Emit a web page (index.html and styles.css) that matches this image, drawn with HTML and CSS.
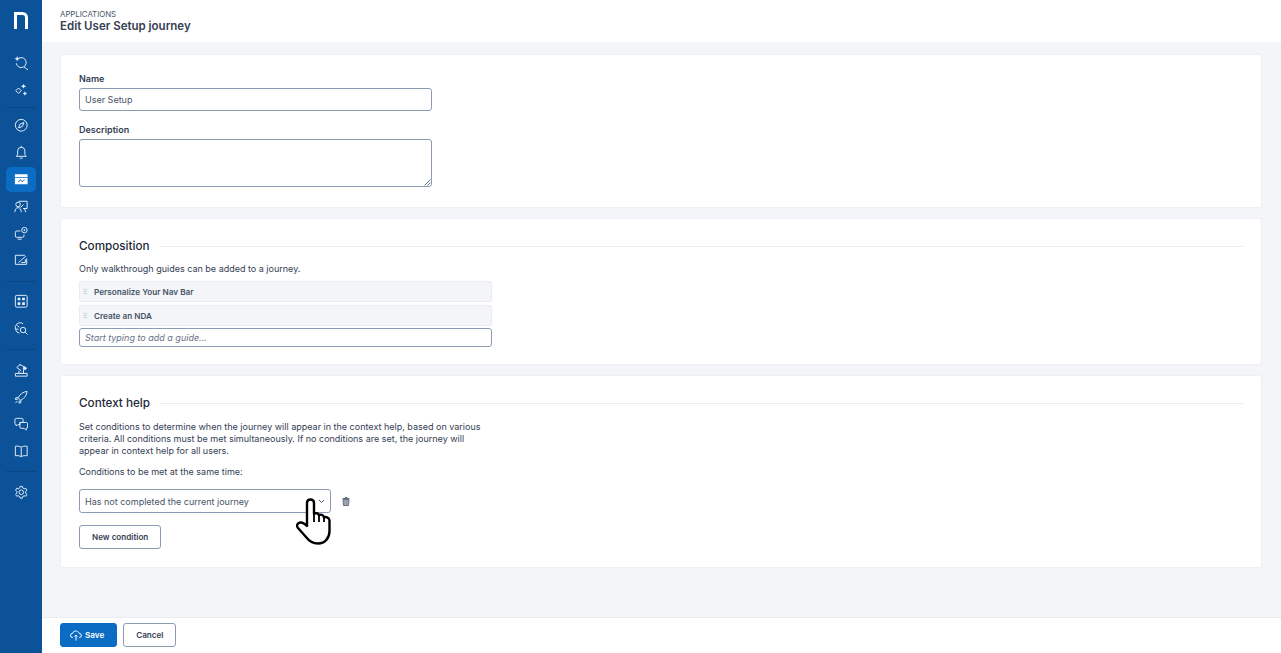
FILE: index.html
```html
<!DOCTYPE html>
<html lang="en">
<head>
<meta charset="utf-8">
<title>Edit User Setup journey</title>
<link rel="stylesheet" href="styles.css">
</head>
<body>
<div class="app">
  <nav class="side">
    <div class="logo"><svg width="14" height="17" viewBox="0 0 14 17"><path d="M1.500 17V1.500H8.500A4 4 0 0 1 12.500 5.500V17" fill="none" stroke="#fff" stroke-width="3"/></svg></div>
    <a class="item"><svg class="ic" viewBox="0 0 16 16"><path d="M3.500 4A5.500 5.500 0 1 1 2.500 8M11 12L15.500 15.500"/><path class="f" d="M3.500 0L4.400 2.100L6.500 3L4.400 3.900L3.500 6L2.600 3.900L.5 3L2.600 2.100Z"/></svg></a>
    <a class="item"><svg class="ic" viewBox="0 0 16 16"><path class="f" d="M10.500 1L11.500 2.700L13.500 3.500L11.500 4.300L10.500 6L9.500 4.300L7.500 3.500L9.500 2.700ZM12 9L12.800 10.700L14.500 11.500L12.800 12.300L12 14L11.200 12.300L9.500 11.500L11.200 10.700Z"/><path d="M5 5.500L8 8.500L5 11.500L2 8.500Z"/></svg></a>
    <hr class="div d1">
    <a class="item"><svg class="ic" viewBox="0 0 16 16"><circle cx="8" cy="8" r="6.500"/><path d="M11 5L9.300 9.300L5 11L6.700 6.700Z"/></svg></a>
    <a class="item"><svg class="ic" viewBox="0 0 16 16"><path d="M2.500 12.500H13.500L12 10.500V6.500A4 4 0 0 0 4 6.500V10.500ZM6.500 14.500H9.500M8 1V2.500"/></svg></a>
    <a class="item active"><svg class="ic" viewBox="0 0 16 16"><path class="f" fill-rule="evenodd" d="M1 2.500H15V13.500H1ZM1 5.500V6.300H15V5.500ZM4 11L5 11.500L7 9.200L9 11L12 8.800L11.500 8.200L9 10L7 8L5 10.500Z"/></svg></a>
    <a class="item"><svg class="ic" viewBox="0 0 16 16"><path d="M5 2.500H14.500V10.500H10M7 9.500L10.500 6"/><circle cx="4.500" cy="6" r="2.500"/><path d="M1 14.500C1 11.500 2.500 9.500 4.500 9.500S8 11.500 8 14.500M11.500 10.500L13 14.500"/></svg></a>
    <a class="item"><svg class="ic" viewBox="0 0 16 16"><path d="M7 5.500H3A1.500 1.500 0 0 0 1.500 7V11A1.500 1.500 0 0 0 3 12.500H9.500A1.500 1.500 0 0 0 11 11V9.500M4 14.500H8.500"/><circle cx="11.500" cy="4.500" r="3"/><circle class="f" cx="11.500" cy="4.500" r="1"/></svg></a>
    <a class="item"><svg class="ic" viewBox="0 0 16 16"><path d="M12 2.500H1.500V12.500H14V6M5 10.500L13 3.500M8 10.500H12.500V7"/></svg></a>
    <hr class="div d2">
    <a class="item"><svg class="ic" viewBox="0 0 16 16"><rect x="1.500" y="1.500" width="13" height="13" rx="1.500"/><path class="f" d="M4 4H7V7H4ZM9 4H12V7H9ZM4 9H7V12H4ZM9 9H12V12H9Z"/></svg></a>
    <a class="item"><svg class="ic" viewBox="0 0 16 16"><path d="M6 13.500A6 6 0 0 1 3 3.500C5 1.500 8 1.500 10 3M3.500 5L6 7M2 9H5"/><circle cx="10" cy="10" r="3"/><path d="M12.200 12.200L15 15"/></svg></a>
    <hr class="div d3">
    <a class="item"><svg class="ic" viewBox="0 0 16 16"><path d="M7 1.500L3 5L8 8.500M6 1.500L12 4.500M5.500 8.500V11.500H10.500V7M1.500 14.500H14.500V11.500H1.500Z"/><path class="f" d="M11 3.500L14.500 5.500L12.500 8L9.500 6Z"/></svg></a>
    <a class="item"><svg class="ic" viewBox="0 0 16 16"><path d="M14.500 1.500C10 2 7 4.500 4.500 8.500L7.500 11.500C11.500 9 14 6 14.500 1.500ZM4.500 8.500L2 8.500L1.500 10.500L4.500 10M7.500 11.500V14L5.500 14.500L6 11.500M4 12L1.500 14.500"/></svg></a>
    <a class="item"><svg class="ic" viewBox="0 0 16 16"><path d="M2.500 1.500H8.500A1.500 1.500 0 0 1 10 3V6H6.500V8.500L4 8.500L2.500 10V8.500A1.500 1.500 0 0 1 1 7V3A1.500 1.500 0 0 1 2.500 1.500ZM6.500 6H13.500A1.500 1.500 0 0 1 15 7.500V11A1.500 1.500 0 0 1 13.500 12.500V14.500L11.500 12.500H8A1.500 1.500 0 0 1 6.500 11Z"/></svg></a>
    <a class="item"><svg class="ic" viewBox="0 0 16 16"><path d="M8 3.500C6.500 2.500 4 2 1.500 2.500V13C4 12.500 6.500 13 8 14C9.500 13 12 12.500 14.500 13V2.500C12 2 9.500 2.500 8 3.500ZM8 3.500V14"/></svg></a>
    <hr class="div d4">
    <a class="item"><svg class="ic" viewBox="0 0 16 16"><circle cx="8" cy="8" r="2.500"/><path d="M6.800 1.500H9.200L9.700 3.300L11.200 4.100L13 3.600L14.200 5.700L12.900 7V9L14.200 10.300L13 12.400L11.200 11.900L9.700 12.700L9.200 14.500H6.800L6.300 12.700L4.800 11.900L3 12.400L1.800 10.300L3.100 9V7L1.800 5.700L3 3.600L4.800 4.100L6.300 3.300Z"/></svg></a>
  </nav>
  <div class="content">
    <header class="top">
      <div class="crumb">APPLICATIONS</div>
      <h1 class="title">Edit User Setup journey</h1>
    </header>
    <main class="main">
      <section class="card c1">
        <label class="lab">Name</label>
        <div class="field name">User Setup</div>
        <label class="lab l2">Description</label>
        <div class="area"><svg class="grip" width="7" height="7" viewBox="0 0 7 7"><path d="M6.500 .5L.5 6.500M6.500 3.500L3.500 6.500" stroke="#667085" fill="none"/></svg></div>
      </section>
      <section class="card c2">
        <div class="head"><h2>Composition</h2><span class="rule"></span></div>
        <p class="txt">Only walkthrough guides can be added to a journey.</p>
        <div class="guide"><span class="dots">⠿</span>Personalize Your Nav Bar</div>
        <div class="guide"><span class="dots">⠿</span>Create an NDA</div>
        <div class="field add">Start typing to add a guide...</div>
      </section>
      <section class="card c3">
        <div class="head"><h2>Context help</h2><span class="rule"></span></div>
        <p class="txt para">Set conditions to determine when the journey will appear in the context help, based on various criteria. All conditions must be met simultaneously. If no conditions are set, the journey will appear in context help for all users.</p>
        <p class="txt cond">Conditions to be met at the same time:</p>
        <div class="row">
          <div class="select">Has not completed the current journey
            <svg class="chev" width="7" height="5" viewBox="0 0 7 5"><path d="M1 1L3.500 3.500L6 1" fill="none" stroke="#475467"/></svg>
          </div>
          <svg class="trash" width="8" height="9" viewBox="0 0 8 9"><path d="M1 2.500H7L6.500 8.500H1.500Z" fill="#98a2b3" stroke="#667085"/><path d="M.5 1.500H7.500M3 1.200V.5H5V1.200" fill="none" stroke="#667085"/></svg>
        </div>
        <button class="btn newc">New condition</button>
      </section>
    </main>
    <footer class="foot">
      <button class="btn save"><svg width="12" height="11" viewBox="0 0 12 11"><path d="M3 7.500H2.500A2 2 0 0 1 2.500 3.500C3 1.500 5 .5 6.500 1.200C8 1.500 9 2.500 9.200 3.500A2 2 0 0 1 9.500 7.500H9M6 10.500V5M4.500 6.500L6 5L7.500 6.500" fill="none" stroke="#fff"/></svg>Save</button>
      <button class="btn">Cancel</button>
    </footer>
  </div>
</div>
<svg class="hand" width="36" height="48" viewBox="0 0 36 48"><path d="M11 5C11 2.500 12.500 1.500 14.500 1.500S18 2.500 18 5V16C19.500 14.500 22.500 15 23 17.500C24.500 16 27.500 16.500 28 19.500C29.500 18.500 33 19 33.500 22.500V33C33.500 40 29 45.500 22 45.500C16 45.500 13 43 10 39L2 30C0 27.500 1.500 25 4 24.500C6.500 24 9 26 11 28Z" fill="#fff" stroke="#000" stroke-width="2.400" stroke-linejoin="round"/><path d="M18 16V24M23 17.500V24M28 19.500V24" stroke="#000" stroke-width="1.800" fill="none"/></svg>
</body>
</html>
```
FILE: styles.css
```css
* { box-sizing: border-box; }
html, body { margin: 0; height: 100%; }
body { font-family: Inter, "Liberation Sans", sans-serif; color: #344054; font-size: 9px; overflow: hidden; }
.app { display: flex; height: 653px; }
.side { width: 42px; flex: none; background: #0b5299; display: flex; flex-direction: column; align-items: center; }
.logo { height: 49.500px; width: 100%; display: flex; justify-content: center; align-items: flex-start; padding-top: 12px; }
.item { height: 27px; width: 30px; display: flex; align-items: center; justify-content: center; flex: none; }
.item.active { background: #0b6cc4; border-radius: 5px; height: 25px; margin: 1px 0; }
.ic { width: 14.500px; height: 14.500px; fill: none; stroke: #dfeaf6; stroke-width: 1.100; }
.ic .f { fill: #e6eff8; stroke: none; }
.active .ic .f { fill: #fff; }
.div { width: 30px; height: 1px; border: 0; margin: 0; background: #0a4684; flex: none; }
.d1 { margin: 3.500px 0 4px; }
.d2 { margin: 6.500px 0; }
.d3 { margin: 6.750px 0; }
.d4 { margin: 6.500px 0; }
.content { flex: 1; display: flex; flex-direction: column; min-width: 0; }
.top { height: 42px; background: #fff; padding: 9px 18px 0; flex: none; }
.crumb { font-size: 7.800px; line-height: 10px; color: #475467; }
.title { margin: 0; font-size: 11.500px; line-height: 14px; font-weight: 600; color: #344054; }
.main { flex: 1; background: #f3f5f9; padding: 12px 19px 0 18px; display: flex; flex-direction: column; gap: 10px; }
.card { background: #fff; border: 1px solid #edeff4; border-radius: 3px; padding: 0 18px; }
.c1 { height: 154px; padding-top: 18px; }
.c2 { height: 147px; padding-top: 20px; }
.c3 { height: 193px; padding-top: 20px; }
.lab { display: block; font-size: 9px; line-height: 11px; font-weight: 600; color: #344054; }
.l2 { margin-top: 13px; }
.field { border: 1px solid #8d9bb5; border-radius: 3px; background: #fff; font-size: 9px; display: flex; align-items: center; padding: 0 5px; color: #475467; }
.name { width: 353px; height: 23px; margin-top: 4px; }
.area { width: 353px; height: 48px; margin-top: 4px; border: 1px solid #8d9bb5; border-radius: 3px; position: relative; }
.grip { position: absolute; right: 0; bottom: 0; }
.head { display: flex; align-items: center; gap: 9px; height: 14px; }
.head h2 { margin: 0; font-size: 11.700px; line-height: 14px; font-weight: 500; color: #1d2939; }
.rule { flex: 1; height: 1px; background: #eaecf0; }
.txt { margin: 0; font-size: 9px; line-height: 12px; color: #344054; }
.c2 .txt { margin-top: 10px; margin-bottom: 6px; }
.guide { width: 413px; height: 21px; margin-bottom: 3px; background: #f3f5f9; border: 1px solid #eaecf2; border-radius: 2px; display: flex; align-items: center; font-weight: 600; font-size: 8.200px; color: #475467; padding-left: 3px; }
.dots { width: 11px; font-size: 6px; color: #98a2b3; font-weight: 400; }
.add { width: 413px; height: 19px; font-style: italic; color: #667085; margin-top: -1px; }
.para { width: 410px; margin-top: 11px; }
.cond { margin-top: 9px; }
.row { display: flex; align-items: center; gap: 11px; margin-top: 11px; }
.select { width: 252px; height: 24px; border: 1px solid #8d9bb5; border-radius: 3px; display: flex; align-items: center; justify-content: space-between; padding: 0 5px; color: #475467; }
.btn { font-family: inherit; font-size: 8.100px; font-weight: 600; height: 24px; background: #fff; border: 1px solid #8d9bb5; border-radius: 3px; color: #344054; padding: 0 12px; display: inline-flex; align-items: center; gap: 4px; }
.newc { margin-top: 12px; }
.foot { height: 36px; background: #fff; border-top: 1px solid #eaecf0; padding: 5px 18px; display: flex; gap: 6px; flex: none; }
.save { background: #0b6cc4; border-color: #0b6cc4; color: #fff; padding: 0 12px 0 9px; gap: 3px; }
.hand { position: absolute; left: 296px; top: 498px; }
```
